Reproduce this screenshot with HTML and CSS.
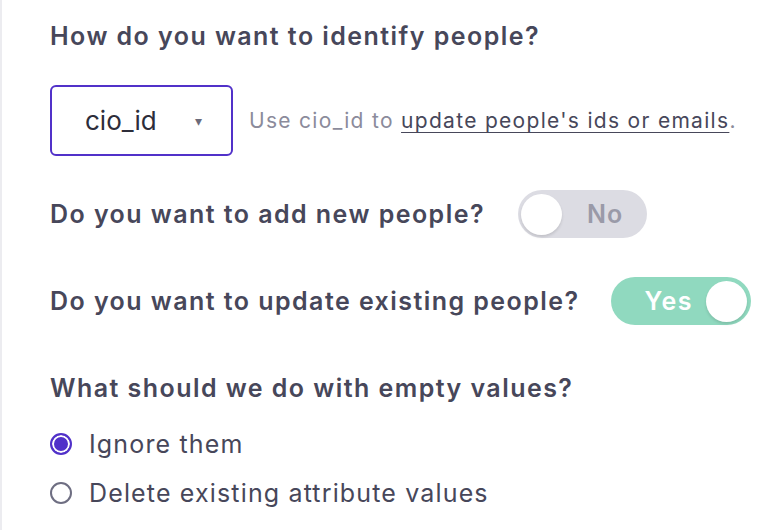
FILE: index.html
```html
<!DOCTYPE html>
<html lang="en">
<head>
  <meta charset="UTF-8" />
  <meta name="viewport" content="width=device-width, initial-scale=1.0"/>
  <title>Import settings</title>
  <link rel="stylesheet" href="styles.css">
</head>
<body>
  <div class="panel">
    <h3 class="question">How do you want to identify people?</h3>

    <div class="identify-row">
      <div class="select-box">
        <span class="select-value">cio_id</span>
        <span class="select-caret">&#9662;</span>
      </div>
      <p class="hint">Use cio_id to <a href="#">update people's ids or emails</a>.</p>
    </div>

    <div class="toggle-row add-row">
      <h3 class="question">Do you want to add new people?</h3>
      <div class="toggle off">
        <span class="knob"></span>
        <span class="toggle-label">No</span>
      </div>
    </div>

    <div class="toggle-row update-row">
      <h3 class="question">Do you want to update existing people?</h3>
      <div class="toggle on">
        <span class="toggle-label">Yes</span>
        <span class="knob"></span>
      </div>
    </div>

    <h3 class="question empty-q">What should we do with empty values?</h3>

    <label class="radio">
      <span class="radio-dot checked"></span>
      Ignore them
    </label>
    <label class="radio">
      <span class="radio-dot"></span>
      Delete existing attribute values
    </label>
  </div>
</body>
</html>
```

FILE: styles.css
```css
body {
  margin: 0;
  font-family: Inter, "Noto Sans", sans-serif;
  background-color: white;
  color: #47475a;
}
.panel {
  height: 530px;
  box-sizing: border-box;
  border-left: 2px solid #ececf0;
  padding: 19px 0 0 48px;
}
.question {
  margin: 0;
  font-size: 25px;
  font-weight: 600;
  letter-spacing: 1.45px;
  line-height: 34px;
  color: #47475a;
}
.identify-row {
  display: flex;
  align-items: center;
  margin-top: 32px;
}
.select-box {
  width: 183px;
  height: 71px;
  box-sizing: border-box;
  border: 2px solid #5131c9;
  border-radius: 6px;
  display: flex;
  align-items: center;
  padding-left: 33px;
  color: #2d2d3a;
}
.select-value {
  font-size: 26px;
  width: 110px;
}
.select-caret {
  font-size: 14px;
  color: #6b6b7a;
}
.hint {
  margin: 0 0 0 16px;
  font-size: 21px;
  letter-spacing: 1.3px;
  color: #8b8b9b;
}
.hint a {
  color: #47475a;
  text-decoration: underline;
  text-underline-offset: 4px;
  text-decoration-thickness: 1px;
}
.toggle-row {
  display: flex;
  align-items: center;
}
.add-row {
  margin-top: 34px;
}
.update-row {
  margin-top: 39px;
}
.toggle {
  height: 48px;
  border-radius: 24px;
  display: flex;
  align-items: center;
  box-sizing: border-box;
  padding: 0 3px;
}
.toggle.off {
  width: 129px;
  margin-left: 33px;
  background-color: #dcdce3;
}
.toggle.on {
  width: 140px;
  margin-left: 31px;
  background-color: #90d9bf;
  justify-content: space-between;
  padding-left: 34px;
  padding-right: 4px;
}
.knob {
  width: 41px;
  height: 41px;
  border-radius: 50%;
  background-color: white;
  box-shadow: 0 2px 3px rgba(0, 0, 0, 0.12);
}
.toggle-label {
  font-size: 25px;
  font-weight: 600;
  letter-spacing: 1px;
}
.toggle.off .toggle-label {
  color: #9a9aa8;
  margin-left: 25px;
}
.toggle.on .toggle-label {
  color: white;
  letter-spacing: 1.5px;
}
.empty-q {
  margin-top: 46px;
}
.radio {
  display: flex;
  align-items: center;
  font-size: 25px;
  letter-spacing: 1.15px;
  color: #47475a;
  line-height: 34px;
}
.radio:first-of-type {
  margin-top: 22px;
}
.radio + .radio {
  margin-top: 15px;
}
.radio-dot {
  width: 22px;
  height: 22px;
  box-sizing: border-box;
  border-radius: 50%;
  border: 2px solid #6e6e82;
  margin-right: 17px;
}
.radio-dot.checked {
  border-color: #5131c9;
  background-color: #5131c9;
  box-shadow: inset 0 0 0 2px white;
}
```
